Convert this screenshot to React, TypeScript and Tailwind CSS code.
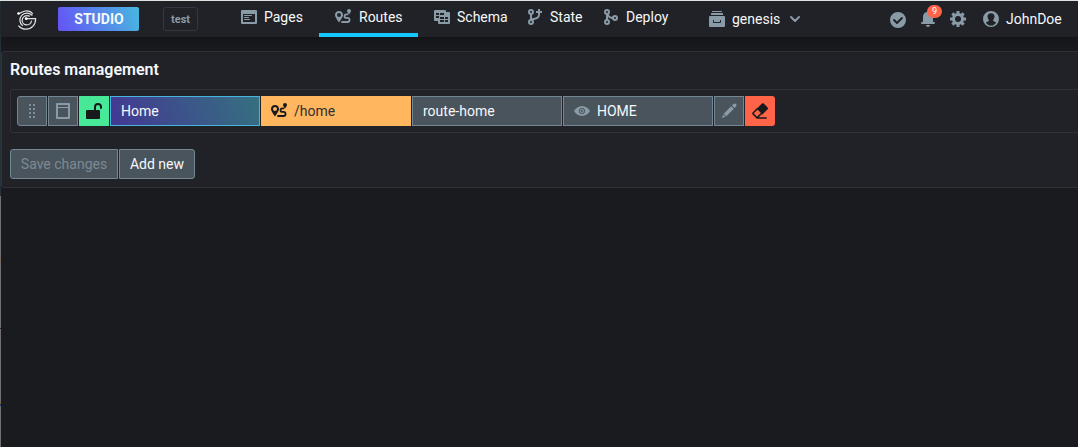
import React from 'react';

const paths: Record<string, React.ReactNode> = {
  pages: <path fillRule="evenodd" d="M1 1h14a1 1 0 011 1v12a1 1 0 01-1 1H1a1 1 0 01-1-1V2a1 1 0 011-1zm1 4v8h12V5H2zm1.5 1h7a.5.5 0 010 1h-7a.5.5 0 010-1zm0 2h4a.5.5 0 010 1h-4a.5.5 0 010-1zm0 2h5a.5.5 0 010 1h-5a.5.5 0 010-1z" />,
  route: (
    <>
      <path fillRule="evenodd" d="M4 2C1.800 2 0 3.700 0 5.900c0 1.400 1 3 4 7.600 3-4.600 4-6.200 4-7.600C8 3.700 6.200 2 4 2zm0 2a2 2 0 110 4 2 2 0 010-4z" />
      <path d="M14 0a2 2 0 00-2 2c0 .7.6 1.500 2 3.500 1.400-2 2-2.800 2-3.500a2 2 0 00-2-2z" />
      <path d="M12.500 5.400H11.300a1.750 1.750 0 000 3.500h1.200a2 2 0 010 4.100H7" fill="none" stroke="currentColor" strokeWidth="1.800" strokeLinecap="round" />
    </>
  ),
  schema: (
    <path fillRule="evenodd" d="M1 1h10a1 1 0 011 1v1h3a1 1 0 011 1v10a1 1 0 01-1 1H5a1 1 0 01-1-1v-2H1a1 1 0 01-1-1V2a1 1 0 011-1zM2 4v2h3V4H2zm4 0v2h4V4H6zM2 7v2h3V7H2zm4 1v2h4V8H6zm5 0v2h3V8h-3zm-5 3v2h4v-2H6zm5 0v2h3v-2h-3z" />
  ),
  state: (
    <g fill="none" stroke="currentColor" strokeWidth="2">
      <circle cx="3" cy="3" r="2" /><circle cx="3" cy="13" r="2" />
      <path d="M3 5v6M3 10.500C7.500 10 11 9 11 6V0M8 3h6" />
    </g>
  ),
  deploy: (
    <g fill="none" stroke="currentColor" strokeWidth="2">
      <circle cx="3" cy="3" r="2" /><circle cx="3" cy="13" r="2" /><circle cx="11" cy="9" r="2" />
      <path d="M3 5v6M3.500 5c.8 2.500 2.500 4 5.500 4" />
    </g>
  ),
  box: <path fillRule="evenodd" d="M3.500 0h9a.5.5 0 010 1h-9a.5.5 0 010-1zM2.500 2h11a.5.500 0 01.5.500V4H2V2.500a.5.5 0 01.5-.5zM1 5h14a1 1 0 011 1v9a1 1 0 01-1 1H1a1 1 0 01-1-1V6a1 1 0 011-1zm3 4v2a1 1 0 001 1h6a1 1 0 001-1V9h-1v2H5V9H4z" />,
  chevron: <path d="M4 6l4 4 4-4" fill="none" stroke="currentColor" strokeWidth="2" strokeLinecap="round" strokeLinejoin="round" />,
  tick: <path fillRule="evenodd" d="M8 0a8 8 0 100 16A8 8 0 008 0zM3.300 7.300a1 1 0 011.400 0L7 9.600l4.300-4.300a1 1 0 011.400 1.400l-5 5a1 1 0 01-1.400 0l-3-3a1 1 0 010-1.400z" />,
  bell: <path d="M8 16c1.100 0 2-.900 2-2H6c0 1.100.900 2 2 2zm6-5c-.550 0-1-.450-1-1V6c0-2.430-1.730-4.450-4.020-4.900C9 1.070 9 1.040 9 1a1 1 0 00-2 0v.1A5 5 0 003 6v4c0 .550-.450 1-1 1a1 1 0 000 2h12a1 1 0 000-2z" />,
  cog: <path fillRule="evenodd" d="M6.500 0h3v2.200l1.500.6 1.600-1.500 2.100 2.100L13.200 5l.6 1.500H16v3h-2.200l-.6 1.500 1.500 1.600-2.100 2.100-1.600-1.500-1.500.6V16h-3v-2.200L5 13.200l-1.600 1.500-2.100-2.100L2.800 11l-.6-1.500H0v-3h2.200L2.800 5 1.300 3.400l2.100-2.100L5 2.800l1.500-.6V0zM8 5a3 3 0 100 6 3 3 0 000-6z" />,
  user: <path fillRule="evenodd" d="M8 0a8 8 0 100 16A8 8 0 008 0zM8 2.200c2.300 0 3.700 1.500 3.500 3.600-.1 1.600-.8 2.300-1.300 3.200-.3.900.2 1.300 1 1.600l2 .9C12 13.500 10.200 14.600 8 14.600s-4-1.100-5.200-3.100l2-.9c.8-.3 1.300-.7 1-1.600-.5-.9-1.200-1.600-1.300-3.200C4.300 3.700 5.700 2.200 8 2.200z" />,
  drag: <path d="M5 1h2v2H5zM9 1h2v2H9zM5 5h2v2H5zM9 5h2v2H9zM5 9h2v2H5zM9 9h2v2H9zM5 13h2v2H5zM9 13h2v2H9z" />,
  layout: <path fillRule="evenodd" d="M2 0h12a1 1 0 011 1v14a1 1 0 01-1 1H2a1 1 0 01-1-1V1a1 1 0 011-1zm1 2v2h10V2H3zm0 3v9h10V5H3z" />,
  unlock: (
    <>
      <path d="M1 7h12a1 1 0 011 1v7a1 1 0 01-1 1H1a1 1 0 01-1-1V8a1 1 0 011-1z" />
      <path d="M9 7V4a3 3 0 016 0v1" fill="none" stroke="currentColor" strokeWidth="2" strokeLinecap="round" />
    </>
  ),
  eye: <path fillRule="evenodd" d="M8 3c3.300 0 6.500 2.200 8 5-1.500 2.800-4.700 5-8 5S1.500 10.800 0 8c1.500-2.800 4.700-5 8-5zm0 2a3 3 0 100 6 3 3 0 000-6zm0 1a2 2 0 110 4 2 2 0 010-4zM8 7a1 1 0 100 2 1 1 0 000-2z" />,
  edit: <path d="M2.700 10.700l7.500-7.500 2.600 2.600-7.500 7.500zM11 2.400l1.400-1.400a1.840 1.840 0 012.600 2.600L13.600 5zM2.200 11.500L1 15l3.500-1.200z" />,
  eraser: (
    <>
      <path d="M4.800 5.700L9.900.6a1.400 1.400 0 011.900 0l3.800 3.800a1.400 1.400 0 010 1.900L10.400 11.400z" />
      <path d="M5.500 5.600L1.300 9.700a1 1 0 000 1.400l3 3a1 1 0 001.400 0l4.500-4.300M4.900 14.900H14.200" fill="none" stroke="currentColor" strokeWidth="1.500" strokeLinecap="round" />
    </>
  ),
};

function Icon({ name, className = 'text-[#8a9ba8]' }: { name: string; className?: string }) {
  return (
    <svg viewBox="0 0 16 16" width="16" height="16" fill="currentColor" className={`shrink-0 overflow-visible ${className}`}>
      {paths[name]}
    </svg>
  );
}

function Logo() {
  return (
    <svg width="20" height="20" viewBox="0 0 20 20" fill="none" stroke="#e0e0e3" strokeWidth="1.200" strokeLinecap="round" className="mt-px ml-4 shrink-0">
      <path d="M1.500 3.500C4.500 3.300 5.500.8 9.500.8c2.600 0 4.800.9 6 2.900M15 5.200C11.800 2.300 7.300 2.500 4.700 5.400c-2.700 3-2.300 7.700.8 10M9.200 8.700H18.600c.2 5.900-4 10.500-9.600 10.500-3 0-5.500-1.200-7.200-3.200M12.400 6.100C9.200 4.500 5.100 6.700 5.100 10.200c0 2.700 2 4.700 4.700 4.700 2.300 0 4.200-1.500 4.700-3.900" />
      <circle cx="1.500" cy="3.500" r="1.300" fill="#fff" stroke="none" />
      <circle cx="9.200" cy="8.700" r="1.400" fill="#fff" stroke="none" />
    </svg>
  );
}

function Tab({ icon, label, className, active = false }: { icon: string; label: string; className: string; active?: boolean }) {
  return (
    <div className={`flex h-9 shrink-0 items-start border-b-4 pt-2 ${active ? 'border-[#14c8ff]' : 'border-transparent'} ${className}`}>
      <Icon name={icon} />
      <span className="ml-[7px] leading-[17px]">{label}</span>
    </div>
  );
}

const cell = 'flex h-[30px] shrink-0 items-center border border-[#738694] bg-[#4a545c]';

export default function App() {
  return (
    <div className="flex h-[447px] w-[1078px] overflow-hidden border-t border-[#dce3e1] bg-[#1a1b1f] font-['Roboto',sans-serif] text-sm leading-[18px] text-[#f5f8fa]">
      <div className="flex w-px shrink-0 flex-col">
        <div className="h-[195px] bg-[#26313a]" />
        <div className="h-[62px] bg-[#707070]" />
        <div className="h-0.5 bg-[#80643c]" />
        <div className="h-[68px] bg-[#707070]" />
        <div className="h-px bg-[#401c20]" />
        <div className="h-[73px] bg-[#707070]" />
        <div className="h-0.5 bg-[#80643c]" />
        <div className="h-0.5 bg-[#1f4264]" />
        <div className="flex-1 bg-[#707070]" />
      </div>
      <div className="flex min-w-0 flex-1 flex-col">
        <header className="z-10 flex h-9 shrink-0 items-center bg-[#212227] shadow-[0_3px_14px_rgba(0,0,0,0.35)]">
          <Logo />
          <div className="ml-[21px] flex h-6 w-[81px] items-center justify-center rounded-[2px] bg-linear-[70deg,#6552f5,#48b8e0] pl-px text-sm font-bold">STUDIO</div>
          <div className="ml-6 flex h-6 w-[35px] items-center justify-center rounded-[3px] border border-[#34373d] pt-px text-[11px] font-bold text-[#8a9ba8]">test</div>
          <Tab icon="pages" label="Pages" className="ml-[43px] w-[78px]" />
          <Tab icon="route" label="Routes" className="w-[99px] pl-4 [&>span]:ml-2" active />
          <Tab icon="schema" label="Schema" className="ml-4 w-[94px] [&>span]:ml-[7px]" />
          <Tab icon="state" label="State" className="w-[76px] [&>span]:ml-1.5" />
          <Tab icon="deploy" label="Deploy" className="w-[105px] [&>span]:ml-1.5" />
          <Icon name="box" />
          <span className="ml-[7px] w-[47px]">genesis</span>
          <Icon name="chevron" className="ml-2 text-[#8a9ba8]" />
          <div className="flex-1" />
          <Icon name="tick" className="mt-0.5 mr-[14px] text-[#8a9ba8]" />
          <div className="relative mr-[14px] flex">
            <Icon name="bell" />
            <span className="absolute -top-[6px] left-[7px] flex h-[13px] w-[15px] items-center justify-center rounded-full bg-[#ff6449] text-[9px] leading-none text-white">9</span>
          </div>
          <Icon name="cog" className="mr-[17px] text-[#8a9ba8]" />
          <Icon name="user" />
          <span className="mr-4 ml-[7px] w-14">JohnDoe</span>
        </header>
        <main className="mt-[14px] -mr-1 h-[137px] rounded-[3px] border border-[#303238] bg-[#212227] pt-[7px] pl-2">
          <h1 className="h-[21px] text-base leading-[21px] font-semibold">Routes management</h1>
          <div className="mt-[9px] flex h-11 items-center gap-px rounded-[2px] border border-[#303238] pl-1.5">
            <div className={`${cell} w-[30px] justify-center rounded-l-[3px]`}><Icon name="drag" className="text-[#8a9ba8] opacity-80" /></div>
            <div className={`${cell} w-[30px] justify-center`}><Icon name="layout" /></div>
            <div className="flex size-[30px] items-center justify-center bg-[#48e899]"><Icon name="unlock" className="text-[#18191b]" /></div>
            <div className="flex h-[30px] w-[150px] items-center border border-[#48b4e0] bg-linear-[70deg,#433894,#357080] pl-2.5">Home</div>
            <div className="flex h-[30px] w-[150px] items-center gap-[7px] bg-[#ffb65f] pl-2.5 text-[#30302f]"><Icon name="route" className="text-[#18191b]" />/home</div>
            <div className={`${cell} w-[150px] pl-2.5`}>route-home</div>
            <div className={`${cell} w-[150px] gap-[7px] pl-2.5`}><Icon name="eye" />HOME</div>
            <div className={`${cell} w-[30px] justify-center`}><Icon name="edit" /></div>
            <div className="flex size-[30px] items-center justify-center rounded-r-[3px] bg-[#ff6449]"><Icon name="eraser" className="text-[#18191b]" /></div>
          </div>
          <div className="mt-4 flex gap-px">
            <button className={`${cell} w-[108px] justify-center rounded-l-[3px] text-[#7d8994]`}>Save changes</button>
            <button className={`${cell} w-[76px] justify-center rounded-r-[3px]`}>Add new</button>
          </div>
        </main>
      </div>
    </div>
  );
}
